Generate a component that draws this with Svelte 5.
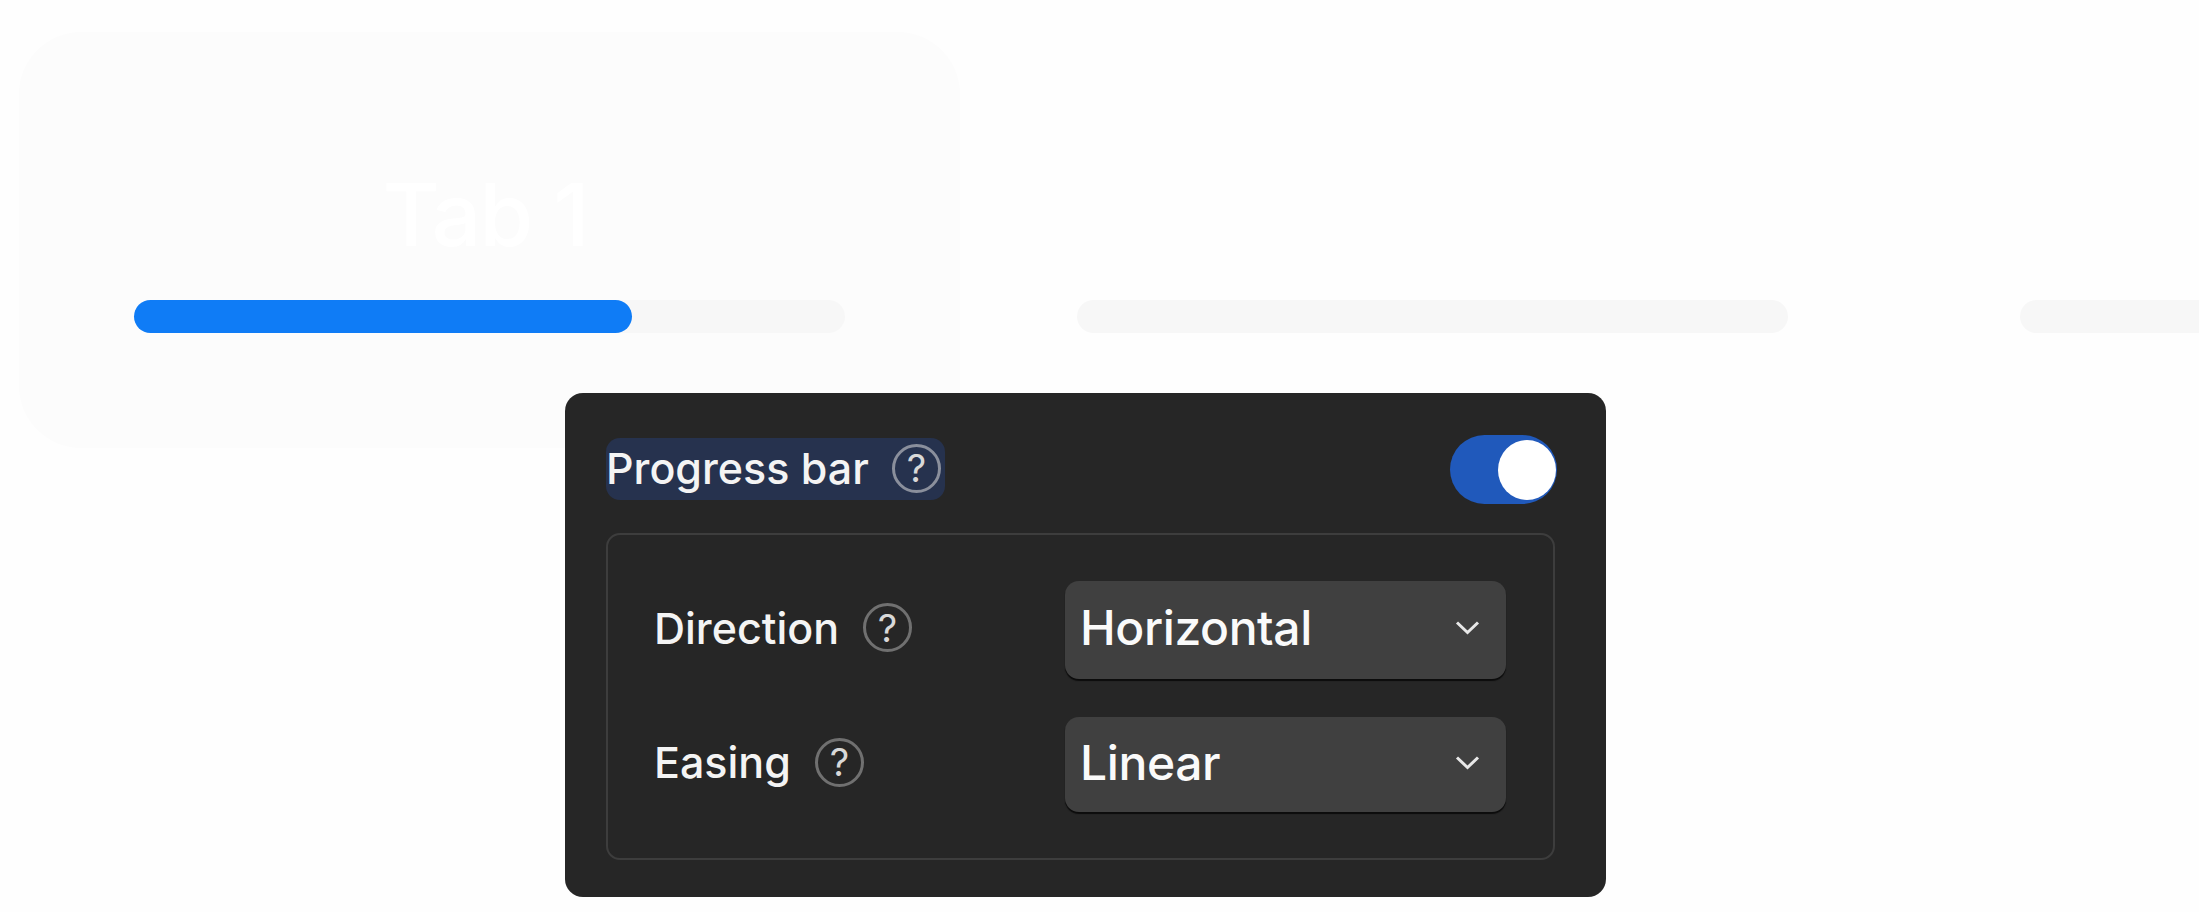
<script>
  const tabs = [
    { label: "Tab 1", progress: 70, active: true },
    { label: "Tab 2", progress: 0, active: false },
    { label: "Tab 3", progress: 0, active: false }
  ];

  const rows = [
    { name: "Direction", value: "Horizontal", tall: true },
    { name: "Easing", value: "Linear", tall: false }
  ];
</script>

<div class="page">
  <div class="tabs">
    {#each tabs as tab}
      <div class="tab" class:active={tab.active}>
        <div class="title">{tab.active ? tab.label : ""}</div>
        <div class="track">
          <div class="fill" style="width: {tab.progress}%"></div>
        </div>
      </div>
    {/each}
  </div>

  <div class="panel">
    <div class="head">
      <div class="label selected">
        <span>Progress bar</span>
        <span class="help">?</span>
      </div>
      <div class="toggle"><div class="knob"></div></div>
    </div>
    <div class="box">
      {#each rows as row}
        <div class="row">
          <div class="label">
            <span>{row.name}</span>
            <span class="help">?</span>
          </div>
          <div class="select" class:tall={row.tall}>
            <span class="value">{row.value}</span>
            <svg width="25" height="15" viewBox="0 0 25 15" fill="none">
              <path d="M2 2.5 L12.5 12.5 L23 2.5" stroke="#e8e8e8" stroke-width="3" />
            </svg>
          </div>
        </div>
      {/each}
    </div>
  </div>
</div>

<style>
  * {
    box-sizing: border-box;
  }

  :global(body) {
    background: #fefefe;
  }

  .page {
    position: relative;
    width: 100vw;
    height: 100vh;
    overflow: hidden;
    font-family: Inter, "Liberation Sans", sans-serif;
  }

  .tabs {
    display: flex;
    gap: 2px;
    padding: 32px 0 0 19px;
  }

  .tab {
    flex: 0 0 941px;
    height: 416px;
    padding: 134px 115px 0;
    border-radius: 62px;
  }

  .tab.active {
    background: #fcfcfc;
  }

  .title {
    height: 134px;
    padding-right: 8px;
    font-size: 87px;
    font-weight: 500;
    letter-spacing: -1.5px;
    line-height: 98px;
    text-align: center;
    color: #fff;
  }

  .track {
    width: 711px;
    height: 33px;
    border-radius: 17px;
    background: #f7f7f7;
  }

  .fill {
    height: 100%;
    border-radius: 17px;
    background: #0f7cf6;
  }

  .panel {
    position: absolute;
    left: 565px;
    top: 393px;
    width: 1041px;
    height: 504px;
    padding: 41px 49px 0 41px;
    border-radius: 18px;
    background: #262626;
    color: #f4f4f4;
  }

  .head {
    display: flex;
    align-items: center;
    justify-content: space-between;
    height: 70px;
  }

  .label {
    display: flex;
    align-items: center;
    gap: 24px;
    font-size: 43px;
    font-weight: 500;
  }

  .selected {
    gap: 23px;
    height: 62px;
    padding: 0 4px 2px 0;
    border-radius: 14px;
    background: #26324e;
  }

  .help {
    display: flex;
    align-items: center;
    justify-content: center;
    width: 49px;
    height: 49px;
    border: 3px solid #707070;
    border-radius: 50%;
    font-size: 38px;
    font-weight: 400;
    color: #d8d8d8;
  }

  .selected .help {
    border-color: #8a8f9c;
  }

  .toggle {
    display: flex;
    align-items: center;
    justify-content: flex-end;
    align-self: flex-end;
    width: 107px;
    height: 69px;
    padding-right: 1px;
    border-radius: 35px;
    background: #2059bb;
  }

  .knob {
    width: 58px;
    height: 60px;
    border-radius: 50%;
    background: #fff;
  }

  .box {
    display: flex;
    flex-direction: column;
    gap: 38px;
    width: 949px;
    height: 327px;
    margin-top: 29px;
    padding: 46px 47px 0 46px;
    border: 2px solid #3d3d3d;
    border-radius: 14px;
  }

  .row {
    display: grid;
    grid-template-columns: 1fr 441px;
    align-items: center;
  }

  .row .label {
    padding-bottom: 5px;
  }

  .select {
    display: flex;
    align-items: center;
    justify-content: space-between;
    height: 95px;
    padding: 0 26px 5px 15px;
    border-radius: 14px;
    background: #404040;
    box-shadow: 0 2px 1px #0c0c0c;
  }

  .select.tall {
    height: 98px;
  }

  .value {
    font-size: 48px;
    font-weight: 500;
    letter-spacing: -0.4px;
    color: #fafafa;
  }
</style>
